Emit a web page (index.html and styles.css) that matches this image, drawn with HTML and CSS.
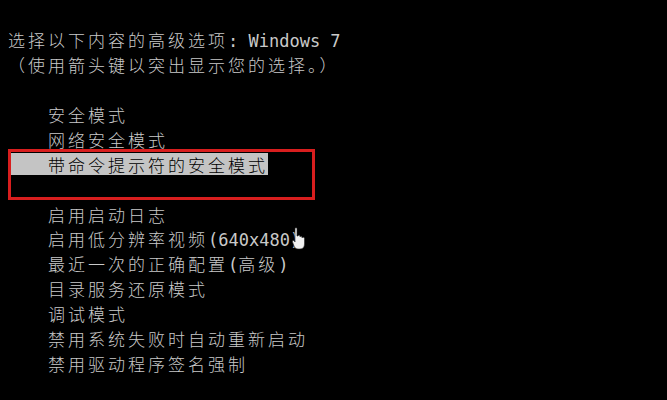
FILE: index.html
```html
<!DOCTYPE html>
<html lang="zh-CN">
<head>
<meta charset="UTF-8">
<meta name="viewport" content="width=device-width, initial-scale=1.0">
<title>高级启动选项</title>
<link rel="stylesheet" href="styles.css">
</head>
<body>

<div class="screen">
    <div class="line">选择以下内容的高级选项<span class="lat">: Windows 7</span></div>
    <div class="line">（使用箭头键以突出显示您的选择。）</div>
    <div class="line"></div>

    <!-- Boot options -->
    <div class="menu">
        <div class="item">安全模式</div>
        <div class="item">网络安全模式</div>
        <div class="item"><span class="selected">带命令提示符的安全模式</span></div>
        <div class="item"></div>
        <div class="item">启用启动日志</div>
        <div class="item">启用低分辨率视频<span class="lat">(640x480)</span></div>
        <div class="item">最近一次的正确配置<span class="lat">(</span>高级<span class="lat">)</span></div>
        <div class="item">目录服务还原模式</div>
        <div class="item">调试模式</div>
        <div class="item">禁用系统失败时自动重新启动</div>
        <div class="item">禁用驱动程序签名强制</div>

        <div class="mark"></div>

        <svg class="cursor" width="14" height="24" viewBox="0 0 14 24">
            <path d="M3 1.5 C3 0.6 5 0.6 5 1.5 L5 9 L6 9 C6 8 8 8 8 9 L8 10 C8 9 10 9 10 10 L10 11 C10 10 12.5 10 12.5 11.5 L12.5 17 C12.5 20 11 22 8 22 L6 22 C4 22 3 21 2 19 L0.5 15 C0 13.5 1.5 13 2.5 14 L3 15 Z" fill="#f2f2f2" stroke="#222" stroke-width="0.6"/>
        </svg>
    </div>
</div>

</body>
</html>
```

FILE: styles.css
```css
html, body {
    margin: 0;
    background-color: #000;
}

body {
    width: 667px;
    height: 400px;
    overflow: hidden;
}

.screen {
    padding: 27px 0 0 8px;
    color: #c9c9c9;
    font-family: "Noto Sans CJK SC", "DejaVu Sans", sans-serif;
    font-weight: 300;
    font-size: 17px;
    letter-spacing: 3px;
    line-height: 25px;
}

.line {
    height: 25px;
}

.lat {
    font-family: "DejaVu Sans Mono", "Liberation Mono", monospace;
    font-weight: normal;
    font-size: 17px;
    letter-spacing: 0;
}

/* Options list */
.menu {
    position: relative;
}

.item {
    padding-left: 40px;
    height: 24.9px;
}

.selected {
    display: inline-block;
    margin: 1px 0 0 -37px;
    padding-left: 37px;
    height: 22px;
    line-height: 23px;
    background-color: #c4c4c4;
    color: #000;
}

/* Red annotation frame */
.mark {
    position: absolute;
    left: 0;
    top: 47px;
    width: 301px;
    height: 45px;
    border: 3px solid #d81e1e;
}

.cursor {
    position: absolute;
    left: 284px;
    top: 125px;
}
```
